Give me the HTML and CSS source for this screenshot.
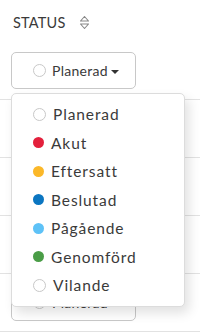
FILE: index.html
```html
<!DOCTYPE html>
<html lang="sv">
<head>
    <meta charset="UTF-8">
    <meta name="viewport" content="width=device-width, initial-scale=1.0">
    <title>Status</title>
    <link rel="stylesheet" href="styles.css">
</head>
<body>
    <div class="table">
        <!-- Kolumnrubrik -->
        <div class="head">
            <span>STATUS</span>
            <svg class="sort" width="11" height="15" viewBox="0 0 11 15">
                <path d="M5.5 1.5 L9.5 6 H1.5 Z" fill="none" stroke="#888" stroke-width="1.1" stroke-linejoin="round"/>
                <path d="M5.5 13.5 L9.5 9 H1.5 Z" fill="none" stroke="#888" stroke-width="1.1" stroke-linejoin="round"/>
            </svg>
        </div>

        <div class="row">
            <div class="dropdown">
                <button class="status-btn"><span class="dot empty"></span>Planerad<span class="caret"></span></button>
                <ul class="menu">
                    <li><span class="dot empty"></span>Planerad</li>
                    <li><span class="dot akut"></span>Akut</li>
                    <li><span class="dot eftersatt"></span>Eftersatt</li>
                    <li><span class="dot beslutad"></span>Beslutad</li>
                    <li><span class="dot pagaende"></span>Pågående</li>
                    <li><span class="dot genomford"></span>Genomförd</li>
                    <li><span class="dot empty"></span>Vilande</li>
                </ul>
            </div>
        </div>
        <div class="row"><button class="status-btn"><span class="dot empty"></span>Planerad<span class="caret"></span></button></div>
        <div class="row"><button class="status-btn"><span class="dot empty"></span>Planerad<span class="caret"></span></button></div>
        <div class="row"><button class="status-btn"><span class="dot empty"></span>Planerad<span class="caret"></span></button></div>
        <div class="row"><button class="status-btn"><span class="dot empty"></span>Planerad<span class="caret"></span></button></div>
    </div>
</body>
</html>
```

FILE: styles.css
```css
body {
    margin: 0;
    font-family: 'Lato', 'DejaVu Sans', sans-serif;
    color: #3a3a3a;
    background: #fff;
}
.head {
    height: 42px;
    display: flex;
    align-items: center;
    gap: 13px;
    padding-left: 13px;
    font-size: 14.5px;
    letter-spacing: 0.2px;
}
.head span {
    margin-top: 3px;
}
.sort {
    margin-top: 3px;
}
.row {
    height: 58px;
    display: flex;
    align-items: center;
    padding-left: 11px;
    border-bottom: 1px solid #e2e2e2;
    box-sizing: border-box;
}
.dropdown {
    position: relative;
}
.status-btn {
    width: 125px;
    height: 37px;
    display: flex;
    align-items: center;
    justify-content: center;
    gap: 6px;
    padding: 0 0 0 5px;
    background: #fff;
    border: 1px solid #c8c8c8;
    border-radius: 5px;
    font-family: inherit;
    font-size: 14px;
    letter-spacing: 0.3px;
    color: #3a3a3a;
}
.caret {
    width: 0;
    height: 0;
    border-left: 4px solid transparent;
    border-right: 4px solid transparent;
    border-top: 4px solid #333;
    margin-left: -3px;
    margin-top: 2px;
}
.dot {
    display: inline-block;
    width: 11px;
    height: 11px;
    border-radius: 50%;
    flex: none;
}
.dot.empty {
    border: 1px solid #c8c8c8;
}
.akut { background: #e3203c; }
.eftersatt { background: #fbb829; }
.beslutad { background: #0b76c1; }
.pagaende { background: #5ec2f7; }
.genomford { background: #4a9d47; }
.menu {
    position: absolute;
    top: 41px;
    left: 0;
    width: 174px;
    margin: 0;
    padding: 6px 0;
    list-style: none;
    background: #fff;
    border: 1px solid #dcdcdc;
    border-radius: 5px;
    box-shadow: 4px 6px 12px rgba(0, 0, 0, 0.12);
    box-sizing: border-box;
    z-index: 2;
}
.menu li {
    height: 28.5px;
    display: flex;
    align-items: center;
    gap: 7px;
    padding-left: 21px;
    font-size: 15.5px;
    letter-spacing: 0.9px;
}
```
